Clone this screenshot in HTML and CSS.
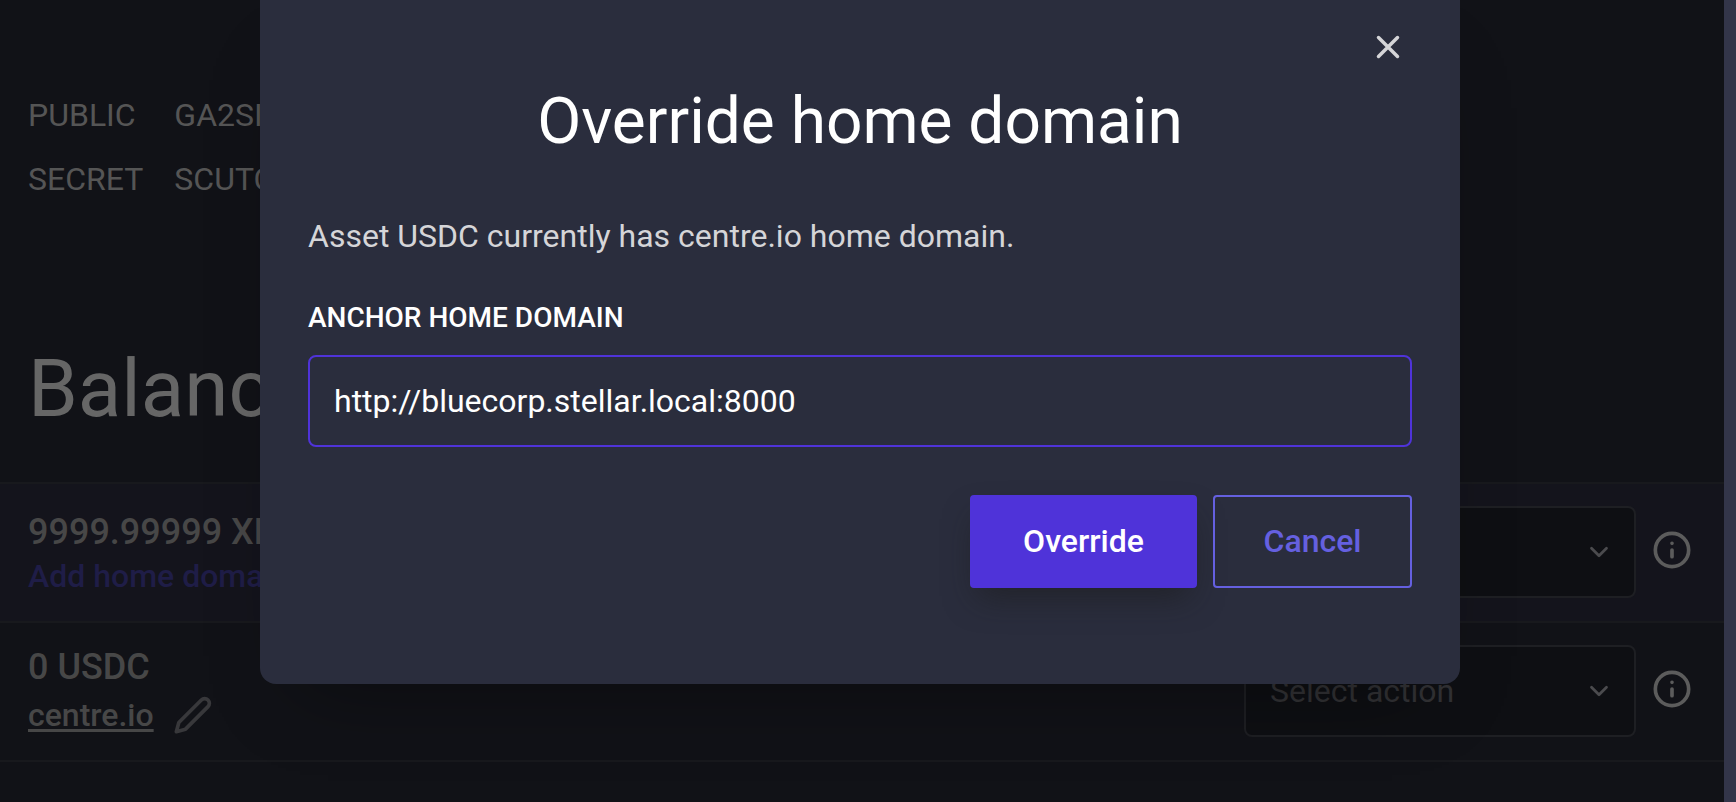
FILE: index.html
```
<!DOCTYPE html>
<html lang="en">
<head>
<meta charset="utf-8">
<title>Override home domain</title>
<link rel="stylesheet" href="styles.css">
</head>
<body>
<main class="page">
  <dl class="account">
    <dt>PUBLIC</dt><dd>GA2SI...</dd>
    <dt>SECRET</dt><dd>SCUTC...</dd>
  </dl>
  <h1 class="heading">Balances</h1>
  <ul class="balances">
    <li class="balance balance--untrusted">
      <div class="asset">
        <span class="amount">9999.99999 XLM</span>
        <button class="add-domain" type="button">Add home domain</button>
      </div>
      <div class="actions">
        <div class="picker">
          <select class="picker-select" aria-label="XLM action"><option>Select action</option></select>
          <svg class="picker-arrow" viewBox="0 0 24 24"><path d="M6 9l6 6 6-6"/></svg>
        </div>
        <button class="icon-button" type="button" aria-label="About XLM actions">
          <svg class="info" viewBox="0 0 24 24"><circle cx="12" cy="12" r="10"/><path d="M12 16v-4M12 8h.01"/></svg>
        </button>
      </div>
    </li>
    <li class="balance">
      <div class="asset">
        <span class="amount">0 USDC</span>
        <div class="domain">
          <a class="domain-link" href="#">centre.io</a>
          <button class="icon-button" type="button" aria-label="Edit home domain">
            <svg class="pencil" viewBox="0 0 24 24"><path d="M17 3a2.828 2.828 0 1 1 4 4L7.500 20.500 2 22l1.500-5.500L17 3z"/></svg>
          </button>
        </div>
      </div>
      <div class="actions">
        <div class="picker">
          <select class="picker-select" aria-label="USDC action"><option>Select action</option></select>
          <svg class="picker-arrow" viewBox="0 0 24 24"><path d="M6 9l6 6 6-6"/></svg>
        </div>
        <button class="icon-button" type="button" aria-label="About USDC actions">
          <svg class="info" viewBox="0 0 24 24"><circle cx="12" cy="12" r="10"/><path d="M12 16v-4M12 8h.01"/></svg>
        </button>
      </div>
    </li>
  </ul>
</main>
<div class="overlay">
  <form class="modal" role="dialog" aria-labelledby="modal-title">
    <button class="icon-button modal-close" type="button" aria-label="Close">
      <svg class="close" viewBox="0 0 24 24"><path d="M18 6L6 18M6 6l12 12"/></svg>
    </button>
    <h2 class="modal-title" id="modal-title">Override home domain</h2>
    <p class="modal-text">Asset USDC currently has centre.io home domain.</p>
    <label class="modal-label" for="domain">ANCHOR HOME DOMAIN</label>
    <input class="modal-input" id="domain" type="text" value="http://bluecorp.stellar.local:8000">
    <div class="modal-buttons">
      <button class="button button--primary" type="button">Override</button>
      <button class="button button--secondary" type="button">Cancel</button>
    </div>
  </form>
</div>
</body>
</html>
```
FILE: styles.css
```
* {
  box-sizing: border-box;
}

body {
  margin: 0;
  height: 100vh;
  overflow: hidden;
  background: #111217;
  border-right: 12px solid #333549;
  color: #555555;
  font: 400 32px/44px Roboto, sans-serif;
}

button,
input,
select {
  font: inherit;
}

svg {
  display: block;
  fill: none;
  stroke: currentColor;
  stroke-width: 2.2;
  stroke-linecap: round;
  stroke-linejoin: round;
}

.page {
  padding-top: 83px;
}

.account {
  display: grid;
  grid-template-columns: max-content 1fr;
  column-gap: 31px;
  margin: 0;
  padding: 0 28px;
  line-height: 64px;
}

.account dd {
  margin: 0;
}

.heading {
  margin: 130px 0 45px;
  padding: 0 28px;
  color: #666666;
  font-size: 80px;
  font-weight: 400;
  line-height: 96px;
}

.balances {
  margin: 0;
  padding: 0;
  list-style: none;
  border-bottom: 2px solid #18191d;
}

.balance {
  display: flex;
  justify-content: space-between;
  align-items: flex-end;
  padding: 22px 32px 23px 28px;
  border-top: 2px solid #18191d;
}

.balance--untrusted {
  background: #14141c;
}

.asset {
  display: flex;
  flex-direction: column;
  align-items: flex-start;
  color: #474747;
  font-weight: 500;
}

.amount {
  font-size: 36px;
}

.add-domain {
  padding: 0;
  border: 0;
  background: none;
  color: #1f1d47;
  font-weight: 500;
}

.domain {
  display: flex;
  align-items: center;
  gap: 19px;
  margin-top: 4px;
}

.domain-link {
  color: inherit;
  text-decoration-thickness: 3px;
  text-underline-offset: 3px;
}

.icon-button {
  padding: 0;
  border: 0;
  background: none;
  color: #5c5c5c;
}

.pencil {
  width: 40px;
  height: 40px;
  color: #38383b;
}

.actions {
  display: flex;
  align-items: center;
  gap: 16px;
}

.picker {
  position: relative;
  width: 392px;
}

.picker-select {
  display: block;
  width: 100%;
  height: 92px;
  padding: 0 24px;
  border: 2px solid #1e1f23;
  border-radius: 8px;
  appearance: none;
  background: #0e0f13;
  color: #323235;
}

.picker-arrow {
  position: absolute;
  top: 31px;
  right: 22px;
  width: 30px;
  height: 30px;
  color: #4b4b4e;
  pointer-events: none;
}

.info {
  width: 40px;
  height: 40px;
  margin-bottom: 4px;
}

.overlay {
  position: absolute;
  inset: 0 16px auto 0;
  display: flex;
  justify-content: center;
}

.modal {
  position: relative;
  width: 1200px;
  max-width: 100%;
  padding: 82px 48px 96px;
  border-radius: 0 0 16px 16px;
  background: #2a2d3d;
  box-shadow: 0 40px 80px -40px rgba(0, 0, 0, 0.4);
  color: #ffffff;
}

.modal-close {
  position: absolute;
  top: 28px;
  right: 53px;
  color: #d5d5d8;
}

.close {
  width: 38px;
  height: 38px;
}

.modal-title {
  margin: 0 0 50px;
  font-size: 64px;
  font-weight: 400;
  line-height: 80px;
  text-align: center;
}

.modal-text {
  margin: 0 0 38px;
  color: #d5d5d8;
  line-height: 48px;
}

.modal-label {
  display: block;
  margin-bottom: 17px;
  font-size: 28px;
  font-weight: 500;
  line-height: 40px;
}

.modal-input {
  display: block;
  width: 100%;
  height: 92px;
  padding: 0 24px;
  border: 2px solid #4f33d9;
  border-radius: 8px;
  outline: 0;
  background: transparent;
  color: #ffffff;
}

.modal-buttons {
  display: flex;
  justify-content: flex-end;
  gap: 16px;
  margin-top: 48px;
}

.button {
  height: 93px;
  padding: 0 48px 2px;
  border: 2px solid;
  border-radius: 4px;
  font-weight: 500;
}

.button--primary {
  min-width: 227px;
  border-color: #4f33d9;
  background: #4f33d9;
  box-shadow: 0 16px 32px -8px rgba(26, 26, 26, 0.6);
  color: #ffffff;
}

.button--secondary {
  min-width: 199px;
  border-color: #6560e0;
  background: transparent;
  color: #6560e0;
}
```
